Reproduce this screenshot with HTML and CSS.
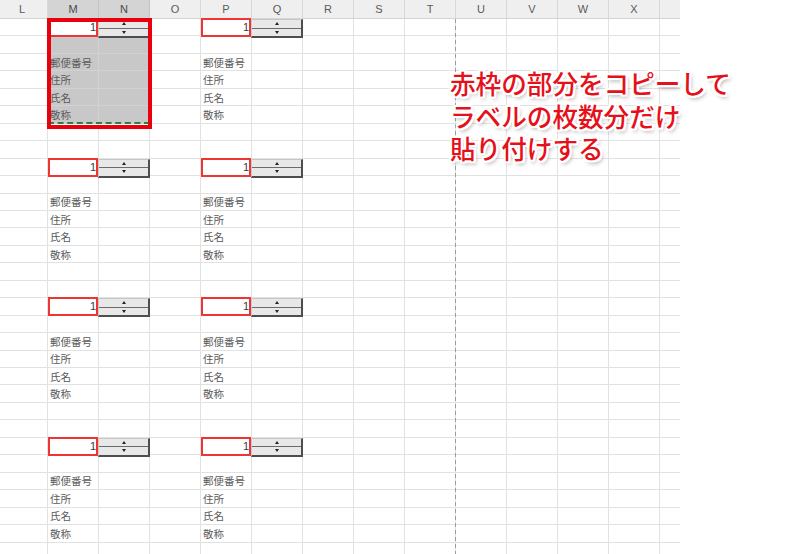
FILE: index.html
```html
<!DOCTYPE html>
<html lang="ja">
<head>
<meta charset="utf-8">
<title>ラベル</title>
<link rel="stylesheet" href="styles.css">
</head>
<body>
<div class="page">
  <div class="colhead">
    <div class="ch first">L</div><div class="ch on">M</div><div class="ch on">N</div><div class="ch">O</div><div class="ch">P</div><div class="ch">Q</div><div class="ch">R</div><div class="ch">S</div><div class="ch">T</div><div class="ch">U</div><div class="ch">V</div><div class="ch">W</div><div class="ch">X</div><div class="ch last"></div>
  </div>
  <div class="sheet">
    <div class="block m r1 sel">
      <div class="num">1</div>
      <div class="spin"><div class="btn up"><span class="tri-up"></span></div><div class="btn"><span class="tri-dn"></span></div></div>
      <div class="blank"></div>
      <div class="lbl">郵便番号</div><div class="lbl">住所</div><div class="lbl">氏名</div><div class="lbl">敬称</div>
    </div>
    <div class="block p r1">
      <div class="num">1</div>
      <div class="spin"><div class="btn up"><span class="tri-up"></span></div><div class="btn"><span class="tri-dn"></span></div></div>
      <div class="blank"></div>
      <div class="lbl">郵便番号</div><div class="lbl">住所</div><div class="lbl">氏名</div><div class="lbl">敬称</div>
    </div>
    <div class="block m r2">
      <div class="num">1</div>
      <div class="spin"><div class="btn up"><span class="tri-up"></span></div><div class="btn"><span class="tri-dn"></span></div></div>
      <div class="blank"></div>
      <div class="lbl">郵便番号</div><div class="lbl">住所</div><div class="lbl">氏名</div><div class="lbl">敬称</div>
    </div>
    <div class="block p r2">
      <div class="num">1</div>
      <div class="spin"><div class="btn up"><span class="tri-up"></span></div><div class="btn"><span class="tri-dn"></span></div></div>
      <div class="blank"></div>
      <div class="lbl">郵便番号</div><div class="lbl">住所</div><div class="lbl">氏名</div><div class="lbl">敬称</div>
    </div>
    <div class="block m r3">
      <div class="num">1</div>
      <div class="spin"><div class="btn up"><span class="tri-up"></span></div><div class="btn"><span class="tri-dn"></span></div></div>
      <div class="blank"></div>
      <div class="lbl">郵便番号</div><div class="lbl">住所</div><div class="lbl">氏名</div><div class="lbl">敬称</div>
    </div>
    <div class="block p r3">
      <div class="num">1</div>
      <div class="spin"><div class="btn up"><span class="tri-up"></span></div><div class="btn"><span class="tri-dn"></span></div></div>
      <div class="blank"></div>
      <div class="lbl">郵便番号</div><div class="lbl">住所</div><div class="lbl">氏名</div><div class="lbl">敬称</div>
    </div>
    <div class="block m r4">
      <div class="num">1</div>
      <div class="spin"><div class="btn up"><span class="tri-up"></span></div><div class="btn"><span class="tri-dn"></span></div></div>
      <div class="blank"></div>
      <div class="lbl">郵便番号</div><div class="lbl">住所</div><div class="lbl">氏名</div><div class="lbl">敬称</div>
    </div>
    <div class="block p r4">
      <div class="num">1</div>
      <div class="spin"><div class="btn up"><span class="tri-up"></span></div><div class="btn"><span class="tri-dn"></span></div></div>
      <div class="blank"></div>
      <div class="lbl">郵便番号</div><div class="lbl">住所</div><div class="lbl">氏名</div><div class="lbl">敬称</div>
    </div>
    <div class="pbreak"></div>
  </div>
  <div class="copybox"></div>
  <p class="note">赤枠の部分をコピーして<br>ラベルの枚数分だけ<br>貼り付けする</p>
</div>
</body>
</html>
```

FILE: styles.css
```css
html, body {
  margin: 0;
  padding: 0;
}
body {
  background: #fff;
  font-family: "Noto Sans CJK JP", "Noto Sans", sans-serif;
}
.page {
  position: relative;
  width: 812px;
  height: 554px;
  overflow: hidden;
}
.colhead {
  display: grid;
  grid-template-columns: 48px repeat(12, 51px) 20px;
  width: 680px;
  height: 19px;
  box-sizing: border-box;
  background: #efefef;
  border-bottom: 1px solid #d4d4d4;
}
.ch {
  border-right: 1px solid #d8d8d8;
  font: 11px/18px "Liberation Sans", Arial, sans-serif;
  color: #5a5a5a;
  text-align: center;
}
.ch.first {
  padding-right: 3px;
}
.ch.on {
  background: #d4d4d4;
  color: #4a4a4a;
  border-right-color: #c4c4c4;
}
.ch.last {
  border-right: 0;
}
.sheet {
  display: grid;
  grid-template-columns: 48px repeat(12, 51px) 20px;
  grid-template-rows: repeat(31, 17.45px);
  width: 680px;
  background-image:
    repeating-linear-gradient(to right, transparent 0 50px, #e2e2e2 50px 51px),
    repeating-linear-gradient(to bottom, transparent 0 16.45px, #e2e2e2 16.45px 17.45px);
  background-position: -3px 0, 0 0;
}
.block {
  display: grid;
  grid-template-columns: 51px 51px;
  grid-template-rows: repeat(6, 1fr);
  position: relative;
}
.m { grid-column: 2 / span 2; }
.p { grid-column: 5 / span 2; }
.r1 { grid-row: 1 / span 6; }
.r2 { grid-row: 9 / span 6; }
.r3 { grid-row: 17 / span 6; }
.r4 { grid-row: 25 / span 6; }
.sel {
  background-color: #c8c8c8;
  background-image:
    repeating-linear-gradient(to right, transparent 0 50px, #d2d2d2 50px 51px),
    repeating-linear-gradient(to bottom, transparent 0 16.45px, #d2d2d2 16.45px 17.45px);
}
.sel::after {
  content: "";
  position: absolute;
  inset: 0;
  border-right: 2px dashed #2a8240;
  border-bottom: 2px dashed #2a8240;
  pointer-events: none;
}
.num {
  grid-column: 1;
  align-self: start;
  box-sizing: border-box;
  width: 50px;
  height: 19px;
  margin-top: -1px;
  border: 2px solid #ef3434;
  background: #fff;
  font: 11px/15px "Liberation Sans", Arial, sans-serif;
  color: #3a3a3a;
  text-align: right;
  padding-right: 0;
}
.spin {
  grid-column: 2;
  align-self: start;
  box-sizing: border-box;
  width: 52px;
  height: 19px;
  margin-left: -1px;
  display: flex;
  flex-direction: column;
  background: #e8e8e8;
  border-top: 1px solid #c6c6c6;
  border-left: 1px solid #cbcbcb;
  border-right: 2px solid #4e4e4e;
  border-bottom: 2px solid #4e4e4e;
}
.btn {
  flex: 1;
  display: flex;
  align-items: center;
  justify-content: center;
}
.btn.up {
  border-bottom: 1px solid #6a6a6a;
}
.tri-up {
  width: 0;
  height: 0;
  border-left: 2.5px solid transparent;
  border-right: 2.5px solid transparent;
  border-bottom: 3px solid #222;
}
.tri-dn {
  width: 0;
  height: 0;
  border-left: 2.5px solid transparent;
  border-right: 2.5px solid transparent;
  border-top: 3px solid #222;
}
.blank {
  grid-column: 1 / -1;
}
.lbl {
  grid-column: 1 / -1;
  padding-left: 2px;
  font-size: 10.5px;
  line-height: 17.45px;
  color: #5a5a5a;
  white-space: nowrap;
}
.pbreak {
  grid-column: 10;
  grid-row: 1 / -1;
  width: 1px;
  margin-left: -1px;
  background: repeating-linear-gradient(to bottom, #9c9c9c 0 4px, transparent 4px 7px);
}
.copybox {
  position: absolute;
  left: 47px;
  top: 18px;
  width: 105px;
  height: 111px;
  box-sizing: border-box;
  border: 4px solid #e8000c;
}
.note {
  position: absolute;
  left: 450px;
  top: 67px;
  margin: 0;
  font-size: 25.6px;
  line-height: 32.5px;
  font-weight: 500;
  color: #e5101a;
  white-space: nowrap;
  text-shadow:
    -2px -2px 0 #fff, 2px -2px 0 #fff, -2px 2px 0 #fff, 2px 2px 0 #fff,
    0 -2px 0 #fff, 0 2px 0 #fff, -2px 0 0 #fff, 2px 0 0 #fff,
    2px 3px 4px rgba(0, 0, 0, 0.4);
}
```
